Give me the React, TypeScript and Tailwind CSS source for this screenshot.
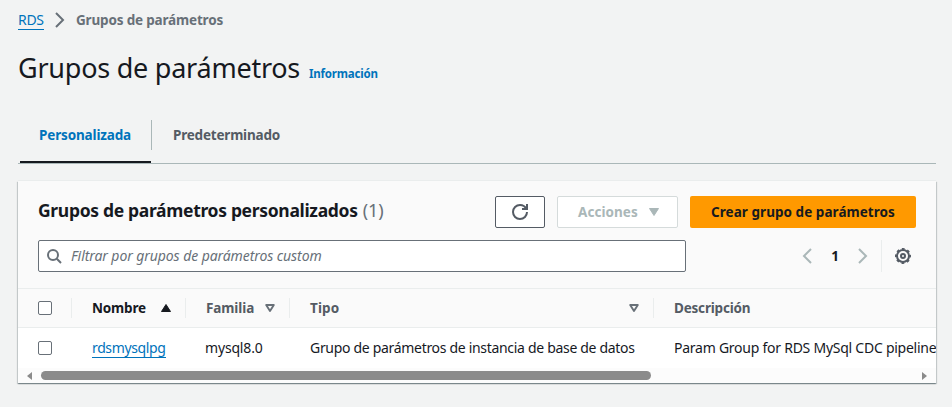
import type { ReactNode } from 'react';

function Chevron({ left = false, className = '' }: { left?: boolean; className?: string }) {
  return (
    <svg viewBox="0 0 16 16" className={`size-4 shrink-0 ${className}`} fill="none" stroke="currentColor" strokeWidth="2">
      <path d={left ? 'M12 1 5 8l7 7' : 'M4 1l7 7-7 7'} />
    </svg>
  );
}

function SortIcon({ up = false }: { up?: boolean }) {
  return up ? (
    <svg viewBox="0 0 10 8" className="h-2 w-2.5 text-[#16191f]"><path d="M5 0.5 9.5 7.5H.5Z" fill="currentColor" stroke="currentColor" strokeLinejoin="round" /></svg>
  ) : (
    <svg viewBox="0 0 10 8" className="h-2 w-2.5 text-[#687078]"><path d="M1.2 1h7.6L5 7Z" fill="none" stroke="currentColor" strokeWidth="1.9" strokeLinejoin="round" /></svg>
  );
}

function Checkbox() {
  return <span role="checkbox" aria-checked="false" className="block size-3.5 rounded-[2px] border border-[#687078] bg-white" />;
}

function Head({ children, icon, className = '' }: { children: ReactNode; icon?: ReactNode; className?: string }) {
  return (
    <div className={`flex h-5 items-center justify-between border-l border-[#eaeded] pl-5 text-[13.5px] font-bold ${className}`}>
      {children}
      {icon}
    </div>
  );
}

export default function App() {
  return (
    <div className="h-[407px] w-[952px] overflow-hidden bg-[#f2f3f3] pl-[18px] pr-4 font-['Noto_Sans',sans-serif] text-[14px] leading-[20px] whitespace-nowrap text-[#16191f]">
      <nav className="flex h-10 items-center">
        <a className="mt-px h-[19px] w-[26px] border-b border-[#0073bb] leading-[17px] tracking-[-0.3px] text-[#0073bb]">RDS</a>
        <Chevron className="ml-[8px] mr-[8px] text-[#687078]" />
        <span className="text-[13.5px] font-bold tracking-[-0.17px] text-[#687078]">Grupos de parámetros</span>
      </nav>

      <header className="flex h-[58px] items-baseline pt-[10px]">
        <h1 className="text-[27px] leading-9 tracking-[-0.24px]">Grupos de parámetros</h1>
        <a className="ml-[9px] text-[11.5px] font-bold tracking-[-0.2px] text-[#0073bb]">Información</a>
      </header>

      <div className="flex h-[66px] items-start border-b border-[#aab7b8] pl-0.5 text-[13.5px] font-bold">
        <div className="flex h-[65px] w-[131px] items-center border-b-2 border-[#16191f] pl-[19px] pt-[11px] tracking-[-0.15px] text-[#0073bb]">Personalizada</div>
        <div className="mt-[22px] flex h-[30px] items-center border-l border-[#aab7b8] pl-[21px] tracking-[-0.2px] text-[#545b64]">Predeterminado</div>
      </div>

      <section className="mt-[17px] h-[202px] overflow-hidden bg-[#fafafa] shadow-[0_1px_1px_0_rgba(0,28,36,0.3),1px_1px_1px_0_rgba(0,28,36,0.15),-1px_1px_1px_0_rgba(0,28,36,0.15),0_-1px_0_0_#eaeded]">
        <div className="flex h-[47px] items-start px-5 pt-[15px]">
          <h2 className="text-[17.5px] leading-[29px] font-bold tracking-[-0.32px]">Grupos de parámetros personalizados</h2>
          <span className="ml-[5px] text-[18px] leading-[29px] text-[#687078]">(1)</span>
          <div className="ml-auto flex gap-3 text-[13.5px] font-bold">
            <button className="flex h-8 w-[50px] items-center justify-center rounded-[2px] border border-[#545b64] bg-white text-[#545b64]">
              <svg viewBox="0 0 16 16" className="size-4" fill="none" stroke="currentColor" strokeWidth="2">
                <path d="M15 8c0 3.87-3.13 7-7 7s-7-3.13-7-7 3.13-7 7-7c2.79 0 5.2 1.63 6.33 4" />
                <path d="M10 5h5V0" />
              </svg>
            </button>
            <button className="flex h-8 w-[121px] items-center rounded-[2px] border border-[#d5dbdb] bg-white pl-5 tracking-[0.05px] text-[#aab7b8]">
              <span>Acciones</span>
              <svg viewBox="0 0 10 8" className="ml-[11px] h-2 w-2.5"><path d="M.5.5h9L5 7.5Z" fill="currentColor" stroke="currentColor" strokeLinejoin="round" /></svg>
            </button>
            <button className="h-8 w-[226px] rounded-[2px] bg-[#ff9900] tracking-[0.05px]">Crear grupo de parámetros</button>
          </div>
        </div>

        <div className="mt-3 flex h-12 items-start pl-5">
          <div className="flex h-8 w-[648px] items-center rounded-[2px] border border-[#687078] bg-white pl-[7px] text-[#687078]">
            <svg viewBox="0 0 16 16" className="mr-[9px] size-4" fill="none" stroke="currentColor" strokeWidth="2">
              <circle cx="7" cy="7" r="5" /><path d="m10.8 10.8 4.2 4.2" />
            </svg>
            <span className="italic tracking-[-0.08px]">Filtrar por grupos de parámetros custom</span>
          </div>
          <div className="ml-[113px] flex h-8 items-center">
            <Chevron left className="text-[#aab7b8]" />
            <span className="w-10 text-center text-[13.5px] font-bold">1</span>
            <Chevron className="text-[#aab7b8]" />
          </div>
          <div className="ml-[10px] flex h-8 items-center border-l border-[#eaeded] pl-[13px] text-[#545b64]">
            <svg viewBox="0 0 16 16" className="size-4" fill="none" stroke="currentColor">
              <circle cx="8" cy="8" r="6" strokeWidth="2" />
              <circle cx="8" cy="8" r="7" strokeWidth="2" strokeDasharray="2.75 2.75" strokeDashoffset="1.37" />
              <circle cx="8" cy="8" r="2" strokeWidth="2" />
            </svg>
          </div>
        </div>

        <div className="grid h-10 grid-cols-[53px_114px_104px_364px_1fr] items-center border-y border-[#eaeded]">
          <div className="pl-5"><Checkbox /></div>
          <Head icon={<SortIcon up />} className="pr-[14px] tracking-[-0.16px] text-[#16191f]">Nombre</Head>
          <Head icon={<SortIcon />} className="pr-[14px] tracking-[-0.1px] text-[#545b64]">Familia</Head>
          <Head icon={<SortIcon />} className="pr-[14px] tracking-[0.1px] text-[#545b64]">Tipo</Head>
          <Head className="tracking-[-0.2px] text-[#545b64]">Descripción</Head>
        </div>

        <div className="grid h-10 grid-cols-[53px_114px_104px_364px_1fr] items-center overflow-hidden bg-white">
          <div className="pl-5"><Checkbox /></div>
          <div className="pl-[21px]"><a className="block h-[19px] w-[74px] border-b border-[#0073bb] leading-[17px] tracking-[-0.37px] text-[#0073bb]">rdsmysqlpg</a></div>
          <div className="pl-5 tracking-[-0.17px]">mysql8.0</div>
          <div className="pl-[21px] tracking-[-0.31px]">Grupo de parámetros de instancia de base de datos</div>
          <div className="min-w-0 overflow-hidden pl-[21px] tracking-[-0.25px]">Param Group for RDS MySql CDC pipeline</div>
        </div>

        <div className="flex h-[15px] items-center bg-[#fcfcfc] pr-[9px] pl-[9px] text-[#8b8b8b]">
          <svg viewBox="0 0 5 8" className="h-2 w-[5px]" fill="currentColor"><path d="M5 0v8L0 4Z" /></svg>
          <div className="ml-[9px] h-[9px] w-[610px] rounded-full bg-[#8b8b8b]" />
          <svg viewBox="0 0 5 8" className="ml-auto h-2 w-[5px]" fill="currentColor"><path d="M0 0v8l5-4Z" /></svg>
        </div>
      </section>
    </div>
  );
}
